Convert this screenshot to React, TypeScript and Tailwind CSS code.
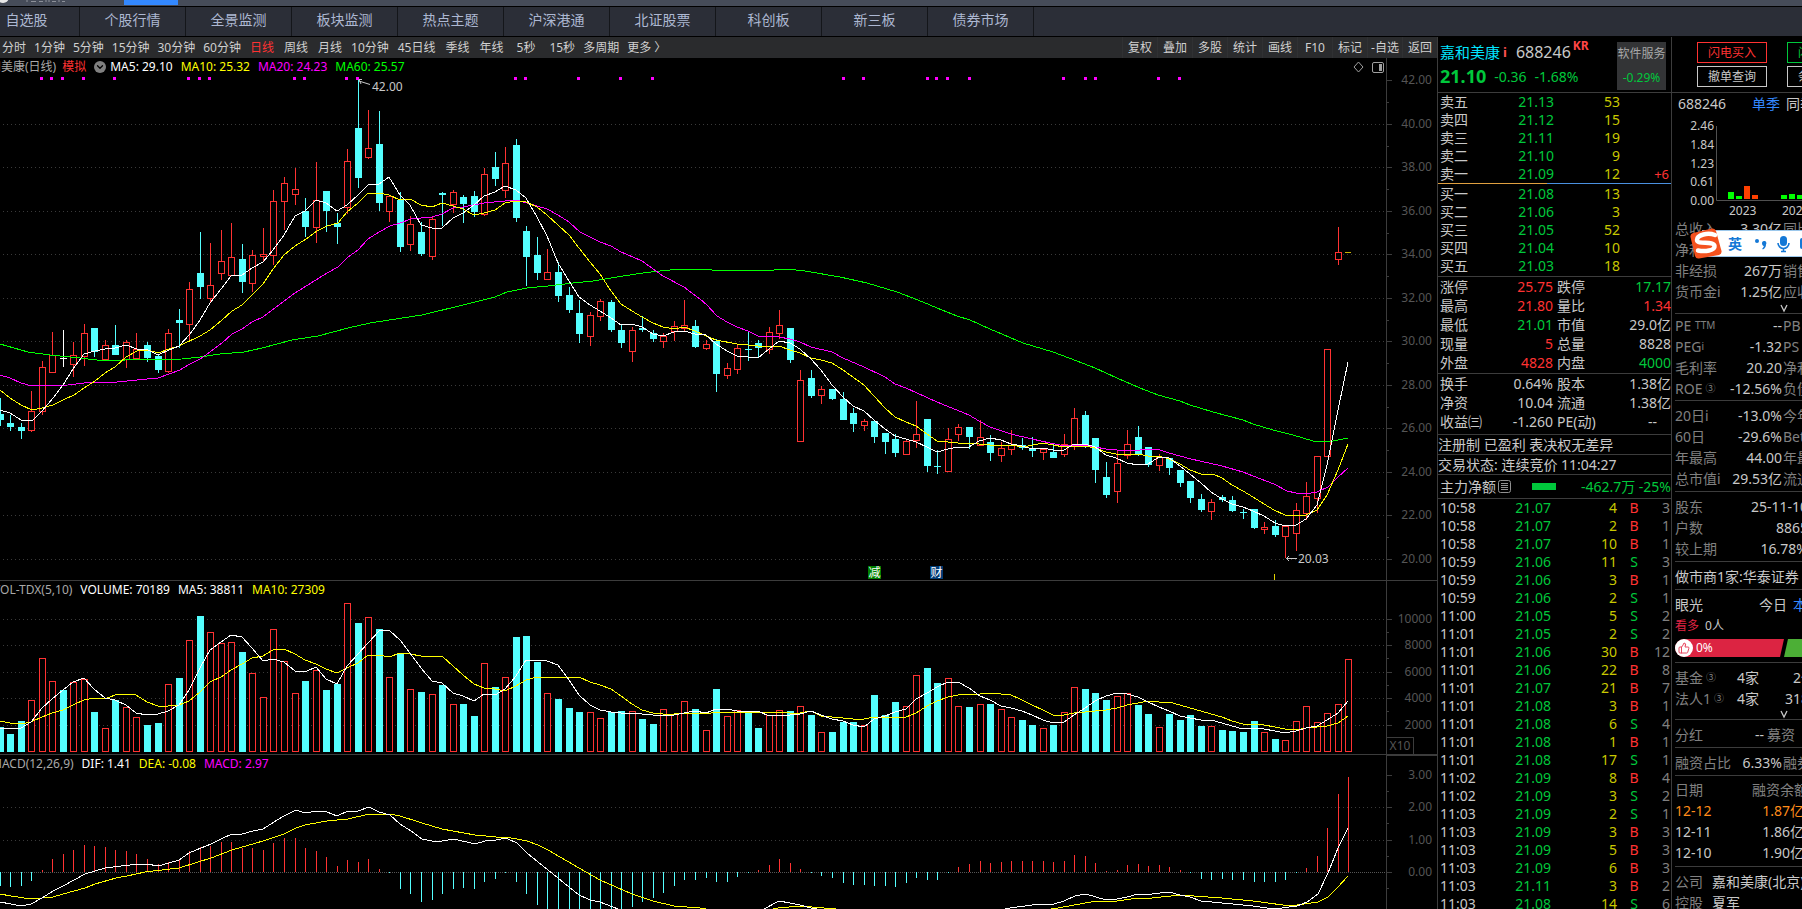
import { ChevronDown, ThumbsUp } from "lucide-react";
import type { ReactNode } from "react";

const CYAN = "#54ffff";
const RED = "#ff3232";

const tabs = ["自选股", "个股行情", "全景监测", "板块监测", "热点主题", "沪深港通", "北证股票", "科创板", "新三板", "债券市场"];
const periods = ["分时", "1分钟", "5分钟", "15分钟", "30分钟", "60分钟", "日线", "周线", "月线", "10分钟", "45日线", "季线", "年线"];
const tools = ["复权", "叠加", "多股", "统计", "画线", "F10", "标记", "-自选", "返回"];

type Candle = ["c" | "r" | "w", number, number, number, number];

// kind, high, body top, body bottom, low
const candles: Candle[] = [
  ["c", 398, 414, 420, 426], ["c", 415, 423, 427, 431], ["c", 423, 427, 431, 439], ["r", 391, 411, 430, 432],
  ["r", 361, 367, 411, 415], ["r", 332, 355, 372, 372], ["w", 330, 358, 359, 367], ["r", 342, 355, 364, 377],
  ["r", 324, 333, 356, 366], ["c", 328, 328, 352, 357], ["r", 340, 345, 359, 359], ["c", 325, 345, 355, 355],
  ["r", 340, 342, 359, 368], ["r", 333, 349, 358, 358], ["c", 342, 345, 358, 362], ["c", 355, 356, 370, 373],
  ["r", 329, 333, 371, 373], ["c", 309, 320, 323, 348], ["r", 282, 289, 324, 341], ["c", 232, 273, 287, 299],
  ["r", 243, 285, 298, 303], ["r", 230, 261, 273, 280], ["r", 223, 257, 275, 275], ["c", 244, 259, 282, 293],
  ["r", 250, 255, 283, 292], ["r", 228, 254, 256, 262], ["r", 190, 201, 255, 265], ["r", 177, 183, 201, 230],
  ["r", 168, 189, 194, 205], ["c", 198, 211, 227, 237], ["r", 162, 200, 227, 243], ["c", 191, 191, 211, 232],
  ["c", 213, 223, 227, 244], ["r", 149, 161, 207, 214], ["c", 80, 128, 178, 188], ["r", 110, 148, 157, 159],
  ["c", 111, 144, 203, 211], ["r", 196, 196, 211, 222], ["c", 192, 200, 247, 252], ["r", 216, 224, 244, 251],
  ["c", 222, 232, 254, 256], ["r", 217, 219, 256, 260], ["c", 192, 193, 195, 226], ["r", 190, 192, 204, 213],
  ["c", 195, 197, 204, 223], ["c", 191, 196, 212, 217], ["r", 168, 174, 214, 216], ["c", 152, 167, 179, 186],
  ["r", 147, 163, 190, 198], ["c", 139, 145, 218, 222], ["c", 226, 231, 257, 286], ["c", 237, 255, 273, 280],
  ["r", 249, 272, 279, 279], ["c", 262, 272, 296, 302], ["c", 287, 295, 310, 313], ["c", 300, 313, 334, 343],
  ["r", 312, 315, 336, 346], ["r", 299, 301, 316, 321], ["c", 300, 302, 330, 332], ["c", 324, 330, 343, 348],
  ["r", 327, 330, 351, 362], ["c", 316, 328, 330, 332], ["c", 330, 333, 339, 342], ["r", 333, 336, 341, 348],
  ["r", 321, 326, 331, 341], ["r", 300, 325, 328, 331], ["c", 320, 326, 347, 348], ["r", 340, 344, 348, 350],
  ["c", 339, 341, 374, 392], ["r", 363, 368, 375, 379], ["r", 345, 348, 369, 374], ["c", 331, 349, 350, 361],
  ["c", 340, 343, 348, 357], ["r", 327, 332, 349, 354], ["r", 310, 325, 333, 339], ["c", 328, 328, 360, 363],
  ["r", 370, 380, 441, 441], ["c", 370, 378, 396, 398], ["r", 386, 389, 395, 404], ["c", 389, 389, 399, 400],
  ["c", 392, 399, 420, 420], ["c", 408, 413, 424, 432], ["r", 419, 421, 425, 431], ["c", 421, 421, 437, 443],
  ["c", 433, 433, 442, 454], ["c", 434, 439, 453, 457], ["r", 439, 441, 454, 454], ["r", 401, 434, 440, 448],
  ["c", 419, 419, 466, 472], ["c", 450, 466, 467, 474], ["r", 428, 439, 471, 471], ["r", 424, 427, 434, 441],
  ["c", 427, 427, 437, 449], ["r", 420, 437, 445, 445], ["c", 435, 442, 453, 461], ["r", 442, 448, 455, 462],
  ["r", 430, 445, 449, 455], ["c", 438, 445, 448, 450], ["c", 437, 448, 451, 457], ["r", 449, 449, 452, 460],
  ["c", 443, 452, 458, 458], ["r", 434, 444, 454, 457], ["r", 408, 418, 446, 450], ["c", 411, 415, 447, 448],
  ["c", 438, 438, 470, 483], ["c", 462, 477, 495, 498], ["r", 450, 463, 491, 503], ["r", 430, 444, 455, 459],
  ["c", 426, 437, 455, 456], ["c", 447, 447, 465, 467], ["r", 454, 457, 465, 471], ["c", 458, 458, 468, 475],
  ["c", 470, 470, 483, 487], ["c", 481, 481, 498, 503], ["c", 494, 499, 510, 512], ["r", 499, 502, 511, 520],
  ["c", 495, 497, 500, 502], ["c", 496, 500, 511, 512], ["c", 509, 512, 513, 519], ["c", 509, 509, 528, 529],
  ["r", 522, 527, 529, 534], ["c", 520, 526, 535, 537], ["r", 526, 526, 536, 558], ["r", 503, 510, 533, 551],
  ["r", 482, 496, 513, 520], ["r", 456, 456, 498, 513], ["r", 349, 349, 456, 456], ["r", 227, 252, 259, 265],
];

const volumes = [
  25, 18, 31, 52, 94, 71, 62, 70, 73, 40, 24, 52, 45, 35, 27, 29, 68, 74, 112, 136, 120, 109, 110, 100, 79, 55, 123, 91, 59, 71,
  82, 62, 68, 149, 129, 135, 123, 75, 98, 63, 60, 58, 67, 48, 48, 36, 89, 65, 75, 115, 116, 90, 59, 53, 44, 40, 40, 34, 40, 41,
  41, 33, 28, 43, 38, 51, 43, 22, 63, 36, 42, 39, 24, 37, 42, 41, 46, 37, 20, 20, 30, 30, 27, 57, 37, 50, 46, 77, 84, 69,
  74, 46, 45, 48, 48, 43, 35, 32, 27, 24, 27, 40, 65, 63, 59, 52, 56, 59, 47, 38, 25, 38, 32, 37, 26, 26, 22, 21, 20, 31,
  20, 13, 12, 31, 46, 30, 39, 48, 93,
];
const earlierVolumes = [38, 38, 38, 38, 38, 24, 24, 24, 24];

const histogram = [
  -14, -15, -14, -9, 2, 13, 18, 22, 27, 26, 25, 22, 21, 18, 13, 8, 10, 12, 21, 25, 26, 30, 30, 24, 24, 22, 29, 34, 34, 24,
  21, 15, 6, 12, 10, 13, 3, -1, -17, -22, -30, -28, -22, -17, -16, -17, -10, -7, -1, -10, -22, -33, -40, -44, -46, -48, -48, -46, -44, -40,
  -35, -30, -26, -21, -14, -8, -8, -6, -10, -10, -5, -1, 2, 7, 13, 9, 3, -1, -4, -6, -11, -13, -13, -14, -14, -15, -11, -6, -8, -8,
  -1, 5, 8, 11, 9, 10, 11, 11, 11, 11, 10, 11, 17, 16, 9, 1, 2, 7, 8, 6, 7, 5, 2, -1, -7, -8, -7, -8, -8, -10,
  -10, -10, -8, -1, 4, 16, 44, 78, 95,
];

const ma60 =
  "0,344 28,352 50,355 80,358 105,361 125,360 182,359 200,357 220,354 244,352 262,348 292,340 318,336 348,328 370,323 422,315 463,305 495,297 507,292 527,288 548,286 573,283 593,281 623,276 643,273 660,271 680,269 700,269 712,270 774,270 785,269 796,270 805,271 840,277 867,283 897,292 923,302 937,308 957,316 970,320 990,329 1023,343 1053,352 1077,361 1095,368 1117,378 1140,388 1158,395 1180,401 1190,405 1213,412 1243,420 1253,424 1273,430 1293,435 1313,441 1333,441 1348,438";
const ma20 =
  "0,375 10,378 21,383 32,386 68,385 92,382 117,382 137,380 158,378 180,370 190,364 200,359 210,352 222,343 232,334 242,329 252,322 263,317 283,302 295,293 327,273 338,267 348,257 358,250 368,239 379,232 390,226 400,223 411,219 432,217 442,214 453,208 463,207 484,203 505,201 516,200 527,203 547,209 558,215 569,222 580,232 600,242 611,246 621,252 633,257 642,261 663,276 684,287 700,299 707,305 717,316 727,322 737,327 748,331 758,336 770,336 779,337 790,339 800,342 811,347 832,352 843,358 864,367 885,377 895,384 906,388 917,393 937,402 969,415 979,421 990,427 1011,434 1032,439 1050,443 1060,445 1085,445 1095,447 1106,449 1117,450 1140,450 1150,449 1160,450 1169,453 1191,459 1222,466 1243,472 1253,476 1274,484 1287,491 1296,493 1306,494 1317,492 1328,487 1338,477 1348,468";
const ma10 =
  "0,390 10,398 21,405 32,410 42,408 53,405 63,400 74,395 84,388 95,381 105,373 115,367 126,357 137,351 148,350 158,353 169,349 179,346 200,336 210,330 222,320 232,311 242,305 253,294 263,284 273,269 284,255 295,246 306,239 317,231 327,226 338,223 347,212 358,203 368,193 379,193 389,195 400,200 410,199 421,205 432,207 442,203 453,206 463,209 474,215 484,213 495,210 505,203 516,201 526,202 537,207 547,215 558,225 569,235 579,248 590,262 600,274 611,291 621,304 632,311 642,317 653,323 663,327 674,329 684,327 695,331 706,336 716,340 737,344 758,346 779,346 790,350 800,353 811,358 821,360 832,363 843,370 864,385 874,396 885,408 895,417 906,422 916,426 927,434 937,441 958,443 979,444 990,445 1011,445 1023,447 1043,443 1053,445 1064,447 1074,446 1085,446 1095,448 1106,452 1116,454 1138,454 1148,456 1159,456 1169,459 1180,464 1190,470 1201,474 1213,474 1222,478 1232,485 1243,491 1253,497 1264,504 1274,510 1285,515 1296,516 1306,515 1317,510 1327,495 1338,470 1348,444";
const ma5 =
  "0,410 10,413 21,420 32,421 42,411 53,398 63,385 73,369 84,354 95,351 105,349 115,348 126,345 137,349 148,350 158,355 169,350 179,346 190,334 200,320 210,303 221,289 231,276 242,275 252,268 263,262 273,250 284,235 295,216 305,211 316,200 326,203 337,211 347,205 358,195 368,185 379,184 389,177 400,195 410,205 421,225 432,228 442,228 453,218 463,213 474,205 484,196 495,192 505,186 516,190 526,198 537,217 547,236 558,263 569,281 579,297 590,305 600,311 611,318 621,325 632,324 642,327 653,334 663,336 674,332 684,331 695,334 706,335 716,344 727,351 737,356 748,357 758,358 769,349 779,341 790,343 800,349 811,359 821,370 832,385 843,397 853,406 864,411 874,420 885,429 895,436 906,439 916,442 927,447 937,452 948,449 958,447 969,447 979,441 990,438 1001,440 1011,444 1022,446 1032,449 1043,448 1053,450 1064,450 1074,444 1085,444 1095,447 1106,455 1116,458 1127,463 1138,465 1148,464 1159,457 1169,458 1180,466 1190,474 1201,483 1211,492 1222,499 1232,504 1243,507 1253,511 1264,516 1275,523 1285,526 1296,525 1306,519 1317,505 1327,465 1338,410 1348,362";
const dif =
  "0,902 11,904 21,906 31,904 42,898 53,891 63,886 85,874 95,871 105,868 138,864 147,864 158,866 169,863 179,860 189,853 201,848 211,844 221,839 232,834 242,834 253,831 263,829 274,822 284,816 296,810 305,813 317,811 327,812 337,816 348,811 358,811 369,807 379,812 390,815 400,824 411,831 422,839 432,841 442,841 454,839 475,844 485,841 496,840 506,838 517,843 527,853 538,862 548,870 558,878 569,887 579,895 590,900 600,902 618,909 680,930 740,920 764,909 779,901 790,903 800,905 811,908 880,920 960,918 1010,908 1032,905 1054,904 1064,901 1075,896 1086,894 1096,897 1106,900 1117,899 1127,897 1138,894 1152,894 1169,892 1180,895 1190,897 1201,901 1222,903 1243,905 1253,906 1274,909 1297,906 1307,902 1318,894 1328,873 1338,848 1348,828";
const dea =
  "0,894 11,896 31,899 53,897 63,894 85,888 95,884 116,878 127,876 145,872 179,868 211,858 232,850 263,841 284,834 296,828 305,825 327,821 348,819 369,814 390,814 400,816 422,823 442,829 475,835 496,837 506,837 527,841 538,845 548,850 579,868 600,880 632,894 653,901 674,906 700,908 730,913 760,912 778,908 800,906 836,909 900,916 1000,916 1058,908 1096,901 1117,901 1138,898 1152,898 1180,895 1222,898 1253,901 1283,905 1297,905 1318,902 1328,897 1338,887 1348,876";

const markers = [
  41, 51, 62, 83, 114, 188, 199, 209, 294, 304, 346, 357, 515, 525, 578, 620, 652, 843, 863, 927, 936, 947, 969, 1063, 1085, 1095, 1158, 1179,
];

const xAt = (k: number) => Math.floor(k * 10.538);

function average(span: number) {
  const all = [...earlierVolumes, ...volumes];
  return volumes
    .map((_, k) => {
      const end = k + earlierVolumes.length + 1;
      const sum = all.slice(end - span, end).reduce((a, b) => a + b, 0);
      return `${xAt(k)},${Math.round(752 - sum / span)}`;
    })
    .join(" ");
}

function Line({ points, color }: { points: string; color: string }) {
  return <polyline points={points} fill="none" stroke={color} strokeWidth={1} shapeRendering="crispEdges" />;
}

function Grid({ rows }: { rows: number[] }) {
  return (
    <g stroke="#3a3a3a" strokeDasharray="1 3" shapeRendering="crispEdges">
      {rows.map((y) => (
        <line key={y} x1={3} x2={1386} y1={y + 0.5} y2={y + 0.5} />
      ))}
    </g>
  );
}

function Axis({ top, height, ticks }: { top: number; height: number; ticks: [number, string][] }) {
  const step = ticks.length > 1 ? (ticks[1][0] - ticks[0][0]) / 2 : 0;
  return (
    <svg className="w-[51px] shrink-0" height={height} viewBox={`0 ${top} 51 ${height}`}>
      <g stroke="#3c3c3c" shapeRendering="crispEdges">
        <line x1={0.5} x2={0.5} y1={top} y2={top + height} />
        {ticks.map(([y]) => (
          <g key={y}>
            <line x1={1} x2={6} y1={y + 0.5} y2={y + 0.5} />
            {y + step < top + height && <line x1={1} x2={3} y1={Math.round(y + step) + 0.5} y2={Math.round(y + step) + 0.5} />}
          </g>
        ))}
      </g>
      {ticks.map(([y, label]) => (
        <text key={label} x={46} y={y + 4} textAnchor="end" fontSize={12} fill="#555555">
          {label}
        </text>
      ))}
    </svg>
  );
}

function PricePlot() {
  return (
    <svg className="h-[504px] w-full" viewBox="0 76 1386 504" preserveAspectRatio="xMinYMin slice">
      <Grid rows={[124, 167, 211, 254, 298, 341, 385, 428, 472, 515, 559]} />
      <g shapeRendering="crispEdges">
        {markers.map((x) => (
          <rect key={x} x={x - 1} y={77} width={3} height={3} fill="#ff00ff" />
        ))}
        {candles.map(([kind, high, top, bottom, low], k) => {
          const x = xAt(k);
          if (kind === "r") {
            return (
              <g key={k} fill={RED}>
                <rect x={x} y={high} width={1} height={top - high} />
                <rect x={x} y={bottom} width={1} height={low - bottom} />
                <rect x={x - 2.5} y={top + 0.5} width={6} height={Math.max(bottom - top, 1)} fill="#000000" stroke={RED} />
              </g>
            );
          }
          return (
            <g key={k} fill={kind === "w" ? "#ffffff" : CYAN}>
              <rect x={x} y={high} width={1} height={low - high} />
              <rect x={x - 3} y={top} width={7} height={bottom - top} />
            </g>
          );
        })}
        <rect x={1345} y={252} width={6} height={1} fill="#c8b400" />
        <rect x={1274} y={574} width={1} height={6} fill="#e0d000" />
      </g>
      <Line points={ma60} color="#00ff00" />
      <Line points={ma20} color="#ff00ff" />
      <Line points={ma10} color="#ffff00" />
      <Line points={ma5} color="#ffffff" />
      <g stroke="#c8c8c8" fill="none">
        <path d="M370 84.500L359 81M362 79.500H359L361 84" />
        <path d="M1297 558.500H1286.500M1289 556L1286.500 558.500L1289 561" />
      </g>
      <g fontSize={12} fill="#c8c8c8">
        <text x={372} y={91}>42.00</text>
        <text x={1298} y={563}>20.03</text>
      </g>
      <rect x={868} y={566} width={13} height={13} fill="#008000" />
      <rect x={930} y={566} width={13} height={13} fill="#003a74" />
      <g fontSize={12} fill="#ffffff" textAnchor="middle">
        <text x={874.5} y={577}>减</text>
        <text x={936.5} y={577}>财</text>
      </g>
    </svg>
  );
}

function VolumePlot() {
  return (
    <svg className="h-[155px] w-full" viewBox="0 599 1386 155" preserveAspectRatio="xMinYMin slice">
      <Grid rows={[619, 645, 672, 698, 725]} />
      <g shapeRendering="crispEdges">
        {volumes.map((h, k) => {
          const x = xAt(k);
          const up = k >= candles.length || candles[k][0] === "r";
          return up ? (
            <rect key={k} x={x - 2.5} y={752 - h + 0.5} width={6} height={h - 1} fill="#000000" stroke={RED} />
          ) : (
            <rect key={k} x={x - 3} y={752 - h} width={7} height={h} fill={CYAN} />
          );
        })}
      </g>
      <Line points={average(10)} color="#ffff00" />
      <Line points={average(5)} color="#ffffff" />
    </svg>
  );
}

function MacdPlot() {
  return (
    <svg className="h-[136px] w-full" viewBox="0 773 1386 136" preserveAspectRatio="xMinYMin slice">
      <Grid rows={[807, 840]} />
      <line x1={0} x2={1386} y1={872.5} y2={872.5} stroke="#555555" strokeDasharray="1 1" shapeRendering="crispEdges" />
      <g shapeRendering="crispEdges">
        {histogram.map((h, k) => (
          <rect key={k} x={xAt(k)} y={h > 0 ? 872 - h : 872} width={1} height={Math.abs(h)} fill={h > 0 ? RED : CYAN} />
        ))}
      </g>
      <Line points={dea} color="#ffff00" />
      <Line points={dif} color="#ffffff" />
    </svg>
  );
}

function Legend({ children }: { children: ReactNode }) {
  return <div className="flex h-[18px] items-center gap-2 overflow-hidden whitespace-nowrap text-xs leading-4">{children}</div>;
}

function Charts() {
  return (
    <main className="flex min-h-0 min-w-0 flex-1 flex-col overflow-hidden border-r border-[#3c3c3c]">
      <nav className="flex h-[21px] shrink-0 items-center justify-between bg-[#2a2b2d] text-xs leading-[21px] whitespace-nowrap text-[#d0d0d0]">
        <div className="flex gap-2 pl-0.5">
          {periods.map((p) => (
            <button key={p} type="button" className={p === "日线" ? "px-px text-[#ff3232]" : p.endsWith("线") ? "px-px" : ""}>
              {p}
            </button>
          ))}
          <button type="button" className="px-1">5秒</button>
          <button type="button" className="pl-0.5">15秒</button>
          <button type="button">多周期</button>
          <button type="button">更多 〉</button>
        </div>
        <div className="flex">
          {tools.map((t) => (
            <button key={t} type="button" className="w-[35px] border-l border-[#303133] text-center">
              {t}
            </button>
          ))}
        </div>
      </nav>

      <section className="flex h-[522px] shrink-0">
        <div className="min-w-0 flex-1">
          <div className="flex items-center justify-between">
            <Legend>
              <span className="-ml-[11px] text-[#a8a8a8]">和美康(日线)</span>
              <span className="-ml-0.5 text-[#ff3232]">模拟</span>
              <button type="button" aria-label="展开" className="grid size-3 place-items-center rounded-full bg-[#808080] text-black">
                <ChevronDown size={10} strokeWidth={3} />
              </button>
              <span className="-ml-1 text-white">MA5: 29.10</span>
              <span className="text-[#ffff00]">MA10: 25.32</span>
              <span className="text-[#ff00ff]">MA20: 24.23</span>
              <span className="text-[#00ff00]">MA60: 25.57</span>
            </Legend>
            <svg width="34" height="14" viewBox="0 0 34 14" fill="none" stroke="#a0a0a0">
              <path d="M6.500 2L11 7L6.500 12L2 7Z" />
              <rect x="20.500" y="2.500" width="11" height="10" rx="1.500" />
              <rect x="27" y="4" width="3" height="7" fill="#a0a0a0" stroke="none" />
            </svg>
          </div>
          <PricePlot />
        </div>
        <Axis
          top={58}
          height={522}
          ticks={[[80, "42.00"], [124, "40.00"], [167, "38.00"], [211, "36.00"], [254, "34.00"], [298, "32.00"], [341, "30.00"], [385, "28.00"], [428, "26.00"], [472, "24.00"], [515, "22.00"], [559, "20.00"]]}
        />
      </section>

      <section className="flex h-[174px] shrink-0 border-t border-[#3c3c3c]">
        <div className="min-w-0 flex-1">
          <Legend>
            <span className="-ml-[7px] text-[#a8a8a8]">VOL-TDX(5,10)</span>
            <span className="text-white">VOLUME: 70189</span>
            <span className="text-white">MA5: 38811</span>
            <span className="text-[#ffff00]">MA10: 27309</span>
          </Legend>
          <VolumePlot />
        </div>
        <div className="relative">
          <Axis top={581} height={173} ticks={[[619, "10000"], [645, "8000"], [672, "6000"], [698, "4000"], [725, "2000"]]} />
          <span className="absolute bottom-0 left-0 h-[17px] w-[28px] border border-b-0 border-[#3c3c3c] bg-black text-center text-xs leading-[15px] text-[#555555]">
            X10
          </span>
        </div>
      </section>

      <section className="flex min-h-0 flex-1 border-t border-[#3c3c3c]">
        <div className="min-w-0 flex-1">
          <Legend>
            <span className="-ml-[9px] text-[#a8a8a8]">MACD(12,26,9)</span>
            <span className="text-white">DIF: 1.41</span>
            <span className="text-[#ffff00]">DEA: -0.08</span>
            <span className="text-[#ff00ff]">MACD: 2.97</span>
          </Legend>
          <MacdPlot />
        </div>
        <div className="border-t border-[#3c3c3c]">
          <Axis top={756} height={153} ticks={[[775, "3.00"], [807, "2.00"], [840, "1.00"], [872, "0.00"]]} />
        </div>
      </section>
    </main>
  );
}

const asks = [["卖五", "21.13", "53", ""], ["卖四", "21.12", "15", ""], ["卖三", "21.11", "19", ""], ["卖二", "21.10", "9", ""], ["卖一", "21.09", "12", "+6"]];
const bids = [["买一", "21.08", "13", ""], ["买二", "21.06", "3", ""], ["买三", "21.05", "52", ""], ["买四", "21.04", "10", ""], ["买五", "21.03", "18", ""]];

const G = "text-[#00c83c]";
const R = "text-[#ff3232]";
const N = "text-[#c8c8c8]";

const stats: string[][] = [
  ["涨停", "25.75", R, "跌停", "17.17", G],
  ["最高", "21.80", R, "量比", "1.34", R],
  ["最低", "21.01", G, "市值", "29.0亿", N],
  ["现量", "5", R, "总量", "8828", N],
  ["外盘", "4828", R, "内盘", "4000", G],
];
const capital: string[][] = [
  ["换手", "0.64%", N, "股本", "1.38亿", N],
  ["净资", "10.04", N, "流通", "1.38亿", N],
  ["收益㈢", "-1.260", N, "PE(动)", "--\u2003", N],
];

const ticks: [string, string, number, "B" | "S", number][] = [
  ["10:58", "21.07", 4, "B", 3], ["10:58", "21.07", 2, "B", 1], ["10:58", "21.07", 10, "B", 1], ["10:59", "21.06", 11, "S", 3],
  ["10:59", "21.06", 3, "B", 1], ["10:59", "21.06", 2, "S", 1], ["11:00", "21.05", 5, "S", 2], ["11:01", "21.05", 2, "S", 2],
  ["11:01", "21.06", 30, "B", 12], ["11:01", "21.06", 22, "B", 8], ["11:01", "21.07", 21, "B", 7], ["11:01", "21.08", 3, "B", 1],
  ["11:01", "21.08", 6, "S", 4], ["11:01", "21.08", 1, "B", 1], ["11:01", "21.08", 17, "S", 1], ["11:02", "21.09", 8, "B", 4],
  ["11:02", "21.09", 3, "S", 2], ["11:03", "21.09", 2, "S", 1], ["11:03", "21.09", 3, "B", 3], ["11:03", "21.09", 5, "B", 3],
  ["11:03", "21.09", 6, "B", 3], ["11:03", "21.11", 3, "B", 2], ["11:03", "21.08", 14, "S", 6],
];

function Book({ rows }: { rows: string[][] }) {
  return (
    <table className="w-full table-fixed border-collapse">
      <colgroup>
        <col className="w-[50px]" />
        <col className="w-[66px]" />
        <col className="w-[66px]" />
        <col />
      </colgroup>
      <tbody>
        {rows.map(([name, price, lots, change]) => (
          <tr key={name} className="h-[18px] leading-[18px]">
            <th scope="row" className="p-0 pl-0.5 text-left font-normal">{name}</th>
            <td className="p-0 text-right text-[#00c83c]">{price}</td>
            <td className="p-0 text-right text-[#c8c800]">{lots}</td>
            <td className="p-0 pr-0.5 text-right text-[13px] text-[#ff3232]">{change}</td>
          </tr>
        ))}
      </tbody>
    </table>
  );
}

function Stats({ rows }: { rows: string[][] }) {
  return (
    <table className="w-full table-fixed border-collapse whitespace-nowrap">
      <colgroup>
        <col className="w-[52px]" />
        <col className="w-[63px]" />
        <col className="w-[52px]" />
        <col />
      </colgroup>
      <tbody>
        {rows.map(([a, av, ac, b, bv, bc]) => (
          <tr key={a} className="h-[19px] leading-[19px]">
            <th scope="row" className="p-0 pl-0.5 text-left font-normal">{a}</th>
            <td className={`p-0 text-right ${ac}`}>{av}</td>
            <th scope="row" className="p-0 pl-1 text-left font-normal">{b}</th>
            <td className={`p-0 text-right ${bc}`}>{bv}</td>
          </tr>
        ))}
      </tbody>
    </table>
  );
}

function Quote() {
  return (
    <section className="w-[234px] shrink-0 overflow-hidden border-r border-[#3c3c3c] text-sm whitespace-nowrap text-[#c8c8c8]">
      <header className="flex h-[55px] justify-between pt-[5px] pr-[5px] pl-0.5">
        <div>
          <div className="flex h-5 items-center leading-5">
            <h1 className="text-[15px] text-[#00e5ff]">嘉和美康</h1>
            <span className="ml-[3px] text-[13px] font-bold text-[#ff5050]">i</span>
            <span className="ml-[9px] text-base">688246</span>
            <sup className="ml-0.5 text-xs font-bold text-[#ff4646]">KR</sup>
          </div>
          <div className="mt-[3px] flex h-6 items-center gap-2 text-[#00c83c]">
            <strong className="text-[18px]">21.10</strong>
            <span>-0.36</span>
            <span>-1.68%</span>
          </div>
        </div>
        <div className="flex h-12 w-[49px] flex-col items-center justify-between bg-[#333436] py-[3px] text-xs leading-[18px]">
          <span className="text-[#a8a8a8]">软件服务</span>
          <span className="text-[#00c83c]">-0.29%</span>
        </div>
      </header>
      <div className="border-t border-[#3c3c3c]">
        <Book rows={asks} />
      </div>
      <div className="flex h-px">
        <span className="w-[109px] bg-[#e0a040]" />
        <span className="flex-1 bg-[#4a90e0]" />
      </div>
      <div className="py-px">
        <Book rows={bids} />
      </div>
      <div className="border-t border-[#3c3c3c] pb-px">
        <Stats rows={stats} />
      </div>
      <div className="border-t border-[#3c3c3c] pb-[3px]">
        <Stats rows={capital} />
      </div>
      <p className="border-t border-[#3c3c3c] leading-[19px]">注册制 已盈利 表决权无差异</p>
      <p className="border-t border-[#3c3c3c] leading-[19px]">交易状态: 连续竞价 11:04:27</p>
      <div className="flex h-6 items-center border-t border-[#3c3c3c] pl-0.5 leading-[22px]">
        <span>主力净额</span>
        <svg className="ml-0.5" width="13" height="13" viewBox="0 0 13 13" fill="none" stroke="#909090">
          <rect x="0.500" y="0.500" width="12" height="12" rx="2" />
          <path d="M3 3.500H10M3 5.500H10M3 7.500H10M3 9.500H10" />
        </svg>
        <span className="ml-[21px] h-[7px] w-6 bg-[#00c83c]" />
        <span className="ml-auto text-[#00c83c]">-462.7万 -25%</span>
      </div>
      <table className="w-full table-fixed border-collapse border-t border-[#3c3c3c]">
        <colgroup>
          <col className="w-[50px]" />
          <col className="w-[63px]" />
          <col className="w-[66px]" />
          <col className="w-[34px]" />
          <col />
        </colgroup>
        <tbody>
          {ticks.map(([time, price, lots, side, count], i) => (
            <tr key={i} className="h-[18px] leading-[18px]">
              <td className="p-0 pl-0.5">{time}</td>
              <td className="p-0 text-right text-[#00c83c]">{price}</td>
              <td className="p-0 text-right text-[#c8c800]">{lots}</td>
              <td className={side === "B" ? "p-0 text-center text-[#ff3232]" : "p-0 text-center text-[#00c83c]"}>{side}</td>
              <td className="p-0 pr-px text-right text-[#808080]">{count}</td>
            </tr>
          ))}
        </tbody>
      </table>
    </section>
  );
}

function Block({ children }: { children: ReactNode }) {
  return <div className="border-t border-[#3c3c3c] pt-1 pb-0.5">{children}</div>;
}

function Row({ label, value, next }: { label: ReactNode; value: string; next?: string }) {
  return (
    <div className="flex h-[21px] leading-[21px]">
      <div className="flex w-[107px] justify-between">
        <span className="text-[#808080]">{label}</span>
        <span>{value}</span>
      </div>
      <span className="ml-px text-[#808080]">{next}</span>
    </div>
  );
}

function WideRow({ label, value }: { label: string; value: string }) {
  return (
    <div className="flex h-[21px] w-[133px] justify-between leading-[21px]">
      <span className="text-[#808080]">{label}</span>
      <span>{value}</span>
    </div>
  );
}

function More() {
  return (
    <button type="button" aria-label="更多" className="ml-[104px] block h-[11px]">
      <svg width="10" height="11" viewBox="0 0 10 11" fill="none" stroke="#c8c8c8" strokeWidth="1.300">
        <path d="M2 3L5 9L8 3" />
      </svg>
    </button>
  );
}

function RevenueChart() {
  const bars: [number, number, string][] = [
    [56, 7, "#00ff00"], [64, 3, "#00ff00"], [72, 13, "#ff4000"], [80, 4, "#ff4000"], [109, 4, "#00ff00"], [117, 5, "#00ff00"], [125, 4, "#00ff00"],
  ];
  return (
    <svg className="block" width="150" height="101" viewBox="0 117 150 101">
      <path d="M44.500 126V200.500H150" fill="none" stroke="#505050" />
      {bars.map(([x, h, c]) => (
        <rect key={x} x={x} y={199 - h} width={6} height={h} fill={c} />
      ))}
      <g fontSize={12} fill="#c8c8c8">
        <g textAnchor="end">
          <text x={42} y={130}>2.46</text>
          <text x={42} y={149}>1.84</text>
          <text x={42} y={168}>1.23</text>
          <text x={42} y={186}>0.61</text>
          <text x={42} y={205}>0.00</text>
        </g>
        <text x={57} y={215}>2023</text>
        <text x={110} y={215}>2024</text>
      </g>
    </svg>
  );
}

function Fundamentals() {
  return (
    <aside className="w-[130px] shrink-0 overflow-hidden text-sm whitespace-nowrap text-[#c8c8c8]">
      <div className="w-[224px]">
        <div className="grid h-[55px] grid-cols-[70px_70px] content-start gap-x-5 gap-y-[3px] pt-[5px] pl-[25px] text-xs leading-[18px]">
          <button type="button" className="h-[21px] border border-[#ff3232] text-[#ff3232]">闪电买入</button>
          <button type="button" className="h-[21px] border border-[#00c83c] text-[#00c83c]">闪电卖出</button>
          <button type="button" className="h-[21px] border border-[#c8c8c8]">撤单查询</button>
          <button type="button" className="h-[21px] border border-[#c8c8c8]">条件预警</button>
        </div>
        <div className="flex h-[25px] items-start border-t border-[#3c3c3c] pl-1.5 leading-[22px]">
          <span>688246</span>
          <button type="button" className="ml-[26px] text-[#3388ff]">单季</button>
          <button type="button" className="ml-1.5">同季</button>
        </div>
        <RevenueChart />
        <div className="pl-[3px]">
          <Row label="总收入" value="3.30亿" next="同比" />
          <Row label="净利润" value="-0.82亿" next="同比" />
          <Row label="非经损" value="267万" next="销售" />
          <Row label="货币金i" value="1.25亿" next="应收" />
          <More />
          <div className="border-t border-[#3c3c3c] pt-px pb-px">
            <Row label={<>PE <span className="align-top text-[10px]">TTM</span></>} value="--" next="PB" />
            <Row label={<>PEG<span className="align-top text-[10px]">i</span></>} value="-1.32" next="PS" />
            <Row label="毛利率" value="20.20" next="净利" />
            <Row label={<>ROE<span className="ml-[3px] align-top text-[10px]">③</span></>} value="-12.56%" next="负债" />
          </div>
          <Block>
            <Row label="20日i" value="-13.0%" next="今年" />
            <Row label="60日" value="-29.6%" next="Beta" />
            <Row label="年最高" value="44.00" next="年最低" />
            <Row label="总市值i" value="29.53亿" next="流通" />
          </Block>
          <Block>
            <WideRow label="股东" value="25-11-10" />
            <WideRow label="户数" value="8865" />
            <WideRow label="较上期" value="16.78%" />
          </Block>
          <Block>
            <p className="h-[21px] leading-[21px]">做市商1家:华泰证券</p>
          </Block>
          <Block>
            <div className="flex h-[21px] leading-[21px]">
              <span>眼光</span>
              <button type="button" className="ml-14">今日</button>
              <button type="button" className="ml-1.5 text-[#3388ff]">本周</button>
            </div>
            <div className="flex h-[21px] gap-1.5 text-xs leading-[21px]">
              <span className="text-[#e02444]">看多</span>
              <span>0人</span>
            </div>
            <div className="relative mt-[3px] mb-[3px] h-[18px]">
              <svg className="block" width="220" height="18" viewBox="0 0 220 18">
                <path d="M9 0H109L105 18H9A9 9 0 0 1 9 0Z" fill="#dc2442" />
                <path d="M113 0H220V18H109Z" fill="#4caf36" />
                <circle cx="9" cy="9" r="9" fill="#ffffff" />
              </svg>
              <span className="absolute inset-0 flex items-center gap-1.5 pl-[3px] text-xs text-white">
                <ThumbsUp size={12} color="#e8465e" />
                0%
              </span>
            </div>
          </Block>
          <div className="border-t border-[#3c3c3c] pt-1">
            <div className="grid h-[21px] grid-cols-[62px_56px_auto] leading-[21px]">
              <span className="text-[#808080]">基金<span className="ml-[3px] align-top text-[10px]">③</span></span>
              <span>4家</span>
              <span>2亿</span>
            </div>
            <div className="grid h-5 grid-cols-[62px_48px_auto] leading-[21px]">
              <span className="text-[#808080]">法人1<span className="ml-[3px] align-top text-[10px]">③</span></span>
              <span>4家</span>
              <span>318万</span>
            </div>
            <More />
          </div>
          <Block>
            <div className="flex h-[21px] leading-[21px]">
              <span className="w-20 text-[#808080]">分红</span>
              <span>--</span>
              <span className="ml-[3px] text-[#808080]">募资</span>
            </div>
          </Block>
          <Block>
            <Row label="融资占比" value="6.33%" next="融券" />
          </Block>
          <div className="border-t border-[#3c3c3c] pb-[3px]">
            <table className="w-[133px] border-collapse">
              <thead>
                <tr className="h-6 leading-5 text-[#808080]">
                  <th scope="col" className="p-0 pt-1 text-left font-normal">日期</th>
                  <th scope="col" className="p-0 pt-1 text-right font-normal">融资余额</th>
                </tr>
              </thead>
              <tbody>
                <tr className="h-[21px] leading-[21px] text-[#ff8c1a]">
                  <td className="p-0">12-12</td>
                  <td className="p-0 pr-1 text-right">1.87亿</td>
                </tr>
                <tr className="h-[21px] leading-[21px]">
                  <td className="p-0">12-11</td>
                  <td className="p-0 pr-1 text-right">1.86亿</td>
                </tr>
                <tr className="h-[21px] leading-[21px]">
                  <td className="p-0">12-10</td>
                  <td className="p-0 pr-1 text-right">1.90亿</td>
                </tr>
              </tbody>
            </table>
          </div>
          <Block>
            <p className="flex h-[21px] gap-[9px] leading-[21px]">
              <span className="text-[#808080]">公司</span>嘉和美康(北京)
            </p>
            <p className="flex h-[21px] gap-[9px] leading-[21px]">
              <span className="text-[#808080]">控股</span>夏军
            </p>
          </Block>
        </div>
      </div>
    </aside>
  );
}

function InputMethodBar() {
  return (
    <div className="absolute top-[228px] right-0 flex h-[31px] w-[112px] items-center overflow-hidden">
      <div className="ml-3 flex h-[27px] flex-1 items-center border-y border-[#9cc8ec] bg-white">
        <span className="ml-[26px] text-sm font-bold text-[#1478d6]">英</span>
        <svg className="ml-3 shrink-0" width="60" height="20" viewBox="0 0 60 20">
          <circle cx="3" cy="7" r="2" fill="#1478d6" />
          <path d="M8 9a2.200 2.200 0 1 1 4 1.400c0 2.400-1.200 4-3.200 5l-.6-1c1-.6 1.600-1.400 1.600-2.400C8.800 12 8 10.600 8 9Z" fill="#1478d6" />
          <rect x="26" y="2" width="7" height="10" rx="3.500" fill="#1478d6" />
          <path d="M24 9a5.500 5.500 0 0 0 11 0M29.500 14.500V17M27 17.500H32" stroke="#1478d6" strokeWidth="1.600" fill="none" />
          <rect x="46" y="4" width="14" height="11" rx="2" fill="#1478d6" />
        </svg>
      </div>
      <svg className="absolute top-0 left-0" width="33" height="31" viewBox="0 0 33 31">
        <path d="M3 5L22 0.500Q25 0 26 3L31.500 23Q32 26 29 27L9 30.500Q6 31 5 28L0.500 9Q0 6 3 5Z" fill="#f4511e" />
        <path d="M25 7C18 4.500 7 6.500 7 12C7 17 24 12.500 24.500 18C25 22.500 15 24 8 22.500" fill="none" stroke="#ffffff" strokeWidth="4.500" strokeLinecap="round" />
      </svg>
    </div>
  );
}

export default function App() {
  return (
    <div className="relative flex h-screen flex-col overflow-hidden bg-black [font-family:'Noto_Sans','Noto_Sans_CJK_SC',sans-serif]">
      <div className="flex h-1.5 shrink-0 bg-[#464c59]">
        <svg width="124" height="6" viewBox="0 0 124 6">
          <circle cx="3" cy="-3" r="6" fill="#e8e8e8" />
          <path d="M27 0V2M31 1.500H36M39 1.500H43M46 0V2M49 0V2M52 1.500H56M59 0V2M62 1.500H65" stroke="#8d919a" fill="none" />
        </svg>
        <span className="h-[5px] w-[54px] bg-[#3388ff]" />
      </div>
      <nav className="mt-px mb-px flex h-[29px] shrink-0 overflow-hidden bg-[#2b2e37]">
        <div className="-ml-[26px] flex">
          {tabs.map((t) => (
            <button key={t} type="button" className="w-[106px] border-r border-[#14161a] pb-1 text-sm leading-5 text-[#adb8d2]">
              {t}
            </button>
          ))}
        </div>
      </nav>
      <div className="flex min-h-0 flex-1">
        <Charts />
        <Quote />
        <Fundamentals />
      </div>
      <InputMethodBar />
    </div>
  );
}
